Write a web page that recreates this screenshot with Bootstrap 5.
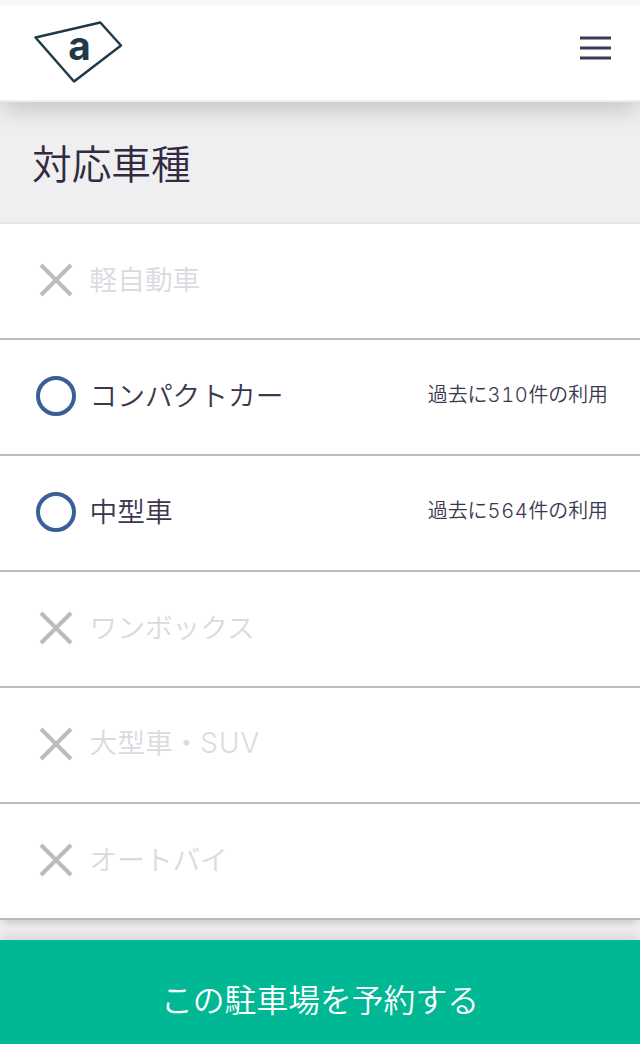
<!DOCTYPE html>
<html lang="ja">
<head>
<meta charset="utf-8">
<meta name="viewport" content="width=device-width, initial-scale=1">
<title>対応車種</title>
<link rel="stylesheet" href="https://cdn.jsdelivr.net/npm/bootstrap@5.3.0/dist/css/bootstrap.min.css">
<style>
body{font-family:"Noto Sans CJK JP",sans-serif;font-weight:350;color:#302b40;background:#efeff1;height:1044px;overflow:hidden}
.site-header{height:102px;background:#fff;box-shadow:0 8px 24px -2px rgba(0,0,0,.2);padding:0 29px 0 34px;z-index:2;border-top:5px solid #f8f7f8;border-bottom:2px solid #eeeef0}
.site-header .logo{overflow:visible}
.site-header .btn{margin-top:-1px}
.section-title{height:120px;padding:0 32px 1px;font-size:39.7px;font-weight:350;line-height:1}
.vehicle-list .type-row{height:116px;padding:0 32px 2px 36px;border:0;border-top:2px solid #bebebf;background:#fff;color:#3c374d;font-size:27.7px;line-height:1}
.vehicle-list .type-row:first-child{border-top-color:#e6e6e8}
.vehicle-list .type-row.off{color:#dadae0}
.type-row svg{width:40px;height:40px;margin-right:13.5px}
.type-label{margin-top:-3px}
.latin{font-family:Inter,sans-serif;font-weight:300;letter-spacing:1.2px}
.usage{font-size:19.9px;margin-top:-3px}
.usage .latin{font-size:20px;font-feature-settings:"tnum";letter-spacing:.7px}
.vehicle-list{border-bottom:2px solid #b9b9bb;border-radius:0;box-shadow:0 5px 8px -3px rgba(0,0,0,.2)}
.reserve{height:104px;padding-top:20px;background:#00b894;color:#fff;font-size:31.8px;border-radius:0;border:0;line-height:1;font-weight:350;box-shadow:0 -2px 14px rgba(0,0,0,.14)}
</style>
</head>
<body class="d-flex flex-column">
<header class="site-header position-relative d-flex align-items-center justify-content-between flex-shrink-0">
<svg class="logo" width="90" height="64" viewBox="0 0 90 64" role="img" aria-label="a"><path d="M1.5 16.5 66.3 1.5 87 24.5 40 60.5Z" fill="none" stroke="#213a4a" stroke-width="2.5" stroke-linejoin="round"/><text x="34.2" y="39" font-family="Inter,sans-serif" font-size="40" font-weight="700" fill="#213a4a" textLength="22.5" lengthAdjust="spacingAndGlyphs">a</text></svg>
<button class="btn p-0 border-0 d-flex mb-2" aria-label="menu"><svg width="31" height="24"><path d="M0 2H31M0 12H31M0 22H31" stroke="#3e3857" stroke-width="3.2"/></svg></button>
</header>
<main>
<h1 class="section-title d-flex align-items-center m-0">対応車種</h1>
<div class="vehicle-list list-group list-group-flush">
<div class="type-row off list-group-item d-flex align-items-center"><svg><path d="M5 5 35 35M35 5 5 35" stroke="#bcbcbc" stroke-width="4"/></svg><span class="type-label">軽自動車</span></div>
<div class="type-row list-group-item d-flex align-items-center"><svg><circle cx="20" cy="20" r="18" fill="none" stroke="#396096" stroke-width="4"/></svg><span class="type-label">コンパクトカー</span><span class="usage ms-auto">過去に<span class="latin">310</span>件の利用</span></div>
<div class="type-row list-group-item d-flex align-items-center"><svg><circle cx="20" cy="20" r="18" fill="none" stroke="#396096" stroke-width="4"/></svg><span class="type-label">中型車</span><span class="usage ms-auto">過去に<span class="latin">564</span>件の利用</span></div>
<div class="type-row off list-group-item d-flex align-items-center"><svg><path d="M5 5 35 35M35 5 5 35" stroke="#bcbcbc" stroke-width="4"/></svg><span class="type-label">ワンボックス</span></div>
<div class="type-row off list-group-item d-flex align-items-center"><svg><path d="M5 5 35 35M35 5 5 35" stroke="#bcbcbc" stroke-width="4"/></svg><span class="type-label">大型車・<span class="latin">SUV</span></span></div>
<div class="type-row off list-group-item d-flex align-items-center"><svg><path d="M5 5 35 35M35 5 5 35" stroke="#bcbcbc" stroke-width="4"/></svg><span class="type-label">オートバイ</span></div>
</div>
</main>
<button class="reserve btn w-100 mt-auto flex-shrink-0">この駐車場を予約する</button>
<script src="https://cdn.jsdelivr.net/npm/bootstrap@5.3.0/dist/js/bootstrap.bundle.min.js"></script>
</body>
</html>
